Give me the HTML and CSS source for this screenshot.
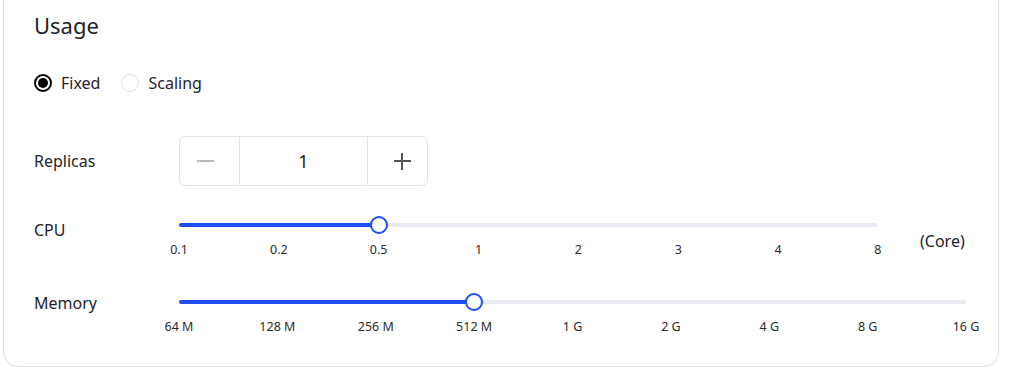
FILE: index.html
```html
<!DOCTYPE html>
<html lang="en">
<head>
  <meta charset="UTF-8" />
  <meta name="viewport" content="width=device-width, initial-scale=1.0">
  <title>Usage</title>
  <link rel="stylesheet" href="styles.css">
</head>
<body>

<!-- Usage card -->
<section class="card">
  <h2 class="card-title">Usage</h2>

  <!-- Mode radios -->
  <div class="radio-group">
    <label class="radio checked"><span class="radio-dot"></span>Fixed</label>
    <label class="radio"><span class="radio-dot"></span>Scaling</label>
  </div>

  <!-- Replicas -->
  <div class="field field-replicas">
    <div class="field-label">Replicas</div>
    <div class="stepper">
      <button class="step-btn minus" aria-label="decrease"><span></span></button>
      <div class="step-value">1</div>
      <button class="step-btn plus" aria-label="increase"><span></span></button>
    </div>
  </div>

  <!-- CPU -->
  <div class="field field-cpu">
    <div class="field-label">CPU</div>
    <div class="slider cpu-slider">
      <div class="rail">
        <div class="rail-fill" style="width:28.571%"></div>
        <div class="handle" style="left:28.571%"></div>
      </div>
      <div class="marks">
        <span>0.1</span><span>0.2</span><span>0.5</span><span>1</span>
        <span>2</span><span>3</span><span>4</span><span>8</span>
      </div>
    </div>
    <div class="unit">(Core)</div>
  </div>

  <!-- Memory -->
  <div class="field field-mem">
    <div class="field-label">Memory</div>
    <div class="slider mem-slider">
      <div class="rail">
        <div class="rail-fill" style="width:37.5%"></div>
        <div class="handle" style="left:37.5%"></div>
      </div>
      <div class="marks">
        <span>64 M</span><span>128 M</span><span>256 M</span><span>512 M</span>
        <span>1 G</span><span>2 G</span><span>4 G</span><span>8 G</span><span>16 G</span>
      </div>
    </div>
  </div>
</section>

</body>
</html>
```

FILE: styles.css
```css
/* ----------  THEME  ---------- */
:root{
  --text:        #1f2329;
  --muted:       #b8b8b8;
  --border:      #e3e3e6;
  --blue:        #1d4ff0;
  --rail:        #e8eaf2;
}

*{box-sizing:border-box}

body{
  margin:0;
  font-family:'Noto Sans','Open Sans',sans-serif;
  color:var(--text);
  background:#fff;
}

/* ----------  CARD  ---------- */
.card{
  margin:-16px 12px 0 3px;
  padding:25px 31px 31px 30px;
  border:1px solid var(--border);
  border-radius:16px;
  box-shadow:0 1px 3px rgba(0,0,0,.05);
  background:#fff;
}

.card-title{
  margin:0;
  font-size:22px; font-weight:400;
  line-height:30px;
}

/* ----------  RADIOS  ---------- */
.radio-group{
  display:flex; align-items:center; gap:21px;
  margin-top:31px; height:24px;
}
.radio{
  display:flex; align-items:center; gap:9px;
  font-size:16px; line-height:24px;
}
.radio-dot{
  width:18px; height:18px;
  border:1.5px solid #dde2ec; border-radius:50%;
  display:flex; justify-content:center; align-items:center;
}
.radio.checked .radio-dot{border:2px solid #000;}
.radio.checked .radio-dot::after{
  content:''; width:10px; height:10px;
  border-radius:50%; background:#000;
}

/* ----------  FIELDS  ---------- */
.field{display:flex; align-items:flex-start;}
.field-label{
  width:145px; flex:none;
  font-size:16px;
}

.field-replicas{margin-top:41px; align-items:center;}

.stepper{
  display:flex; height:50px; width:249px;
  border:1px solid var(--border); border-radius:6px;
}
.step-btn{
  width:59px; flex:none;
  background:none; border:none; padding:0;
  display:flex; justify-content:center; align-items:center;
  cursor:pointer;
}
.step-btn.minus{padding-right:9px;}
.step-btn.plus{padding-left:9px;}
.step-btn span{
  position:relative;
  width:17px; height:2px; background:#555;
}
.step-btn.minus span{background:var(--muted);}
.step-btn.plus span::after{
  content:''; position:absolute;
  left:7.5px; top:-7.5px;
  width:2px; height:17px; background:#555;
}
.step-value{
  flex:1;
  border-left:1px solid var(--border); border-right:1px solid var(--border);
  display:flex; justify-content:center; align-items:center;
  font-size:18px;
}

.field-cpu{margin-top:30px;}
.field-cpu .field-label{line-height:28px;}
.field-mem{margin-top:35px;}
.field-mem .field-label{line-height:20px;}

/* ----------  SLIDERS  ---------- */
.slider{flex:none;}
.cpu-slider{width:699px;}
.mem-slider{width:787px;}

.rail{
  position:relative;
  height:4px; margin-top:7px;
  background:var(--rail); border-radius:2px;
}
.rail-fill{
  height:100%;
  background:var(--blue); border-radius:2px;
}
.handle{
  position:absolute; top:50%;
  width:18px; height:18px;
  margin:-9px 0 0 -9px;
  border:2px solid var(--blue); border-radius:50%;
  background:#fff;
}

.marks{
  display:flex; justify-content:space-between;
  margin-top:15px;
  font-size:12.5px; line-height:16px; color:#2b2b2b;
}
.marks span{
  width:0;
  display:flex; justify-content:center;
  white-space:nowrap;
}

.unit{
  margin:13px 0 0 42px;
  font-size:16px; line-height:24px;
}
```
